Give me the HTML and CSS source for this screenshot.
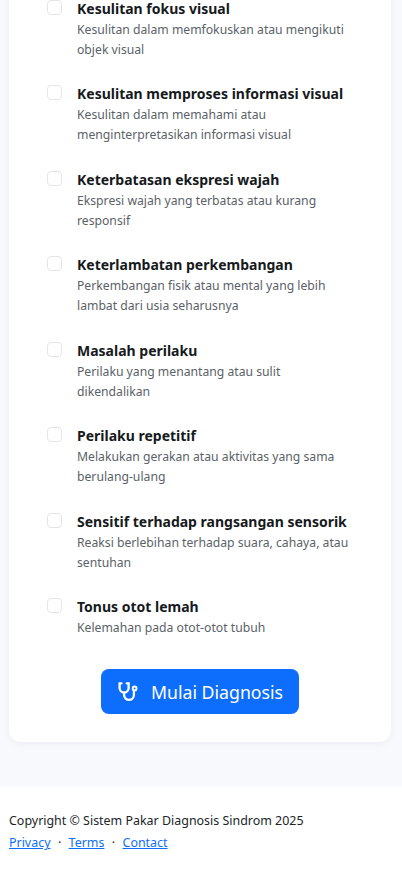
FILE: index.html
```html
<!DOCTYPE html>
<html lang="id">
<head>
<meta charset="utf-8">
<title>Diagnosis</title>
<link rel="stylesheet" href="styles.css">
</head>
<body>
<main class="page">
  <section class="card">
    <ul class="list">
      <li class="item"><span class="check"></span><div><h3>Kesulitan fokus visual</h3><p>Kesulitan dalam memfokuskan atau mengikuti objek visual</p></div></li>
      <li class="item"><span class="check"></span><div><h3>Kesulitan memproses informasi visual</h3><p>Kesulitan dalam memahami atau menginterpretasikan informasi visual</p></div></li>
      <li class="item"><span class="check"></span><div><h3>Keterbatasan ekspresi wajah</h3><p>Ekspresi wajah yang terbatas atau kurang responsif</p></div></li>
      <li class="item"><span class="check"></span><div><h3>Keterlambatan perkembangan</h3><p>Perkembangan fisik atau mental yang lebih lambat dari usia seharusnya</p></div></li>
      <li class="item"><span class="check"></span><div><h3>Masalah perilaku</h3><p>Perilaku yang menantang atau sulit dikendalikan</p></div></li>
      <li class="item"><span class="check"></span><div><h3>Perilaku repetitif</h3><p>Melakukan gerakan atau aktivitas yang sama berulang-ulang</p></div></li>
      <li class="item"><span class="check"></span><div><h3>Sensitif terhadap rangsangan sensorik</h3><p>Reaksi berlebihan terhadap suara, cahaya, atau sentuhan</p></div></li>
      <li class="item"><span class="check"></span><div><h3>Tonus otot lemah</h3><p>Kelemahan pada otot-otot tubuh</p></div></li>
    </ul>
    <div class="actions">
      <button class="btn" type="button">
        <svg class="icon" viewBox="0 0 20 19" fill="none" stroke="currentColor" stroke-width="2.3" stroke-linecap="round" aria-hidden="true"><path d="M3.5 1.3H1.6v4.8a4.5 4.5 0 0 0 9 0V1.3H8.7"/><path d="M6.1 10.6v2.4a4.9 4.9 0 0 0 9.8 0v-3.6"/><circle cx="16.6" cy="6.4" r="1.9" stroke-width="1.9"/></svg>
        <span>Mulai Diagnosis</span>
      </button>
    </div>
  </section>
</main>
<footer class="footer">
  <div>Copyright © Sistem Pakar Diagnosis Sindrom 2025</div>
  <div class="links"><a href="#">Privacy</a><span class="dot">·</span><a href="#">Terms</a><span class="dot">·</span><a href="#">Contact</a></div>
</footer>
</body>
</html>
```
FILE: styles.css
```css
* { box-sizing: border-box; }
html, body { margin: 0; padding: 0; }
body {
  font-family: "Noto Sans", "Open Sans", sans-serif;
  font-size: 14px;
  line-height: 1.5;
  color: #212529;
  background: #fff;
  height: 873px;
  overflow: hidden;
}
.page {
  background: #f8f9fc;
  padding: 0 11px 45px 9px;
  margin-top: -4px;
}
.card {
  background: #fff;
  border-radius: 0 0 12px 12px;
  box-shadow: 0 2px 6px rgba(0, 0, 0, .05);
  padding-bottom: 28px;
}
.list { list-style: none; margin: 0; padding: 0 0 9px 38px; }
.item { display: flex; gap: 15px; padding-bottom: 22.3px; }
.check {
  flex: none;
  width: 15px;
  height: 15px;
  margin-top: 4px;
  border: 1px solid #e3e5e8;
  border-radius: 4px;
  background: #fff;
}
h3 { margin: 0 0 -1px; font-size: 14px; line-height: 25px; font-weight: 700; color: #161a1d; }
p { margin: 0; max-width: 274px; font-size: 12.2px; line-height: 19.6px; color: #5a6268; }
.actions { display: flex; justify-content: center; }
.btn {
  display: flex;
  align-items: center;
  gap: 13px;
  width: 198px;
  height: 45px;
  padding: 0 0 0 17px;
  border: 0;
  border-radius: 8px;
  background: #0d6efd;
  color: #fff;
  font: 400 17.7px/1.5 "Noto Sans", "Open Sans", sans-serif;
}
.icon { flex: none; width: 20px; height: 19px; }
.footer { padding: 23px 9px 0; font-size: 12.45px; line-height: 22px; }
.links a { color: #0d6efd; }
.dot { margin: 0 7.4px; }
```
